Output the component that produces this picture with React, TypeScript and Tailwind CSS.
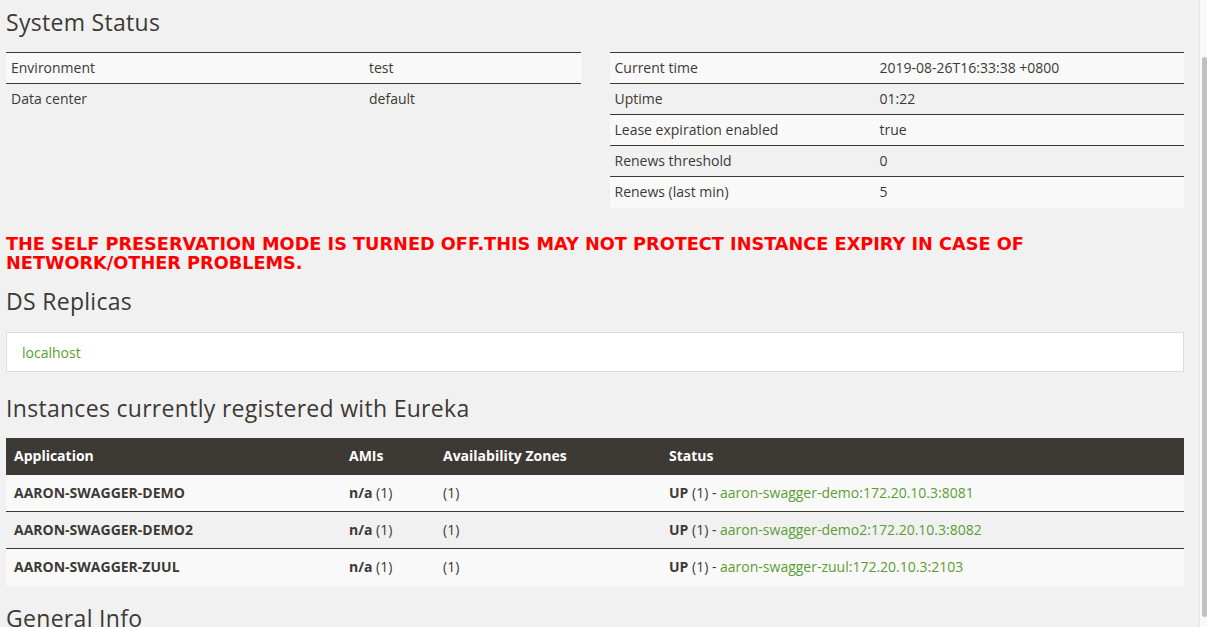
const body = { fontFamily: '"Open Sans", "Liberation Sans", sans-serif' };
const head = { fontFamily: '"Open Sans", Lato, sans-serif' };
const warn = { fontFamily: '"DejaVu Sans", "Open Sans", sans-serif' };

const leftRows = [
  ['Environment', 'test'],
  ['Data center', 'default'],
];

const rightRows = [
  ['Current time', '2019-08-26T16:33:38 +0800'],
  ['Uptime', '01:22'],
  ['Lease expiration enabled', 'true'],
  ['Renews threshold', '0'],
  ['Renews (last min)', '5'],
];

const instances = [
  { app: 'AARON-SWAGGER-DEMO', link: 'aaron-swagger-demo:172.20.10.3:8081' },
  { app: 'AARON-SWAGGER-DEMO2', link: 'aaron-swagger-demo2:172.20.10.3:8082' },
  { app: 'AARON-SWAGGER-ZUUL', link: 'aaron-swagger-zuul:172.20.10.3:2103' },
];

function Heading({ children, className = '' }: { children: React.ReactNode; className?: string }) {
  return (
    <h2
      style={head}
      className={`text-[23px] leading-[28px] font-medium tracking-[0.3px] text-[#3d3935] ${className}`}
    >
      {children}
    </h2>
  );
}

function InfoTable({ rows, keyWidth }: { rows: string[][]; keyWidth: string }) {
  return (
    <div className="flex-1 border-t border-[#3d3935]">
      {rows.map((r, i) => (
        <div
          key={r[0]}
          className={`flex h-[31px] items-center pb-[2px] text-[14px] ${i % 2 === 0 ? 'bg-[#f9f9f9]' : ''} ${
            i < rows.length - 1 ? 'border-b border-[#3d3935]' : ''
          }`}
        >
          <div className={`${keyWidth} pl-[5px]`}>{r[0]}</div>
          <div className="flex-1 pl-[5px]">{r[1]}</div>
        </div>
      ))}
    </div>
  );
}

export default function App() {
  return (
    <div style={body} className="flex h-[627px] w-[1207px] overflow-hidden bg-[#f1f1f1] text-[#3d3935]">
      <div className="flex-1 pl-[6px] pr-[15px]">
        <Heading className="mt-[8px]">System Status</Heading>
        <div className="mt-[16px] flex gap-[29px]">
          <InfoTable rows={leftRows} keyWidth="w-[358px]" />
          <InfoTable rows={rightRows} keyWidth="w-[265px]" />
        </div>

        <h3 style={warn} className="mt-[27px] text-[17.7px] leading-[19px] font-bold text-[#ff0000] uppercase">
          THE SELF PRESERVATION MODE IS TURNED OFF.THIS MAY NOT PROTECT INSTANCE EXPIRY IN CASE OF
          <br />
          NETWORK/OTHER PROBLEMS.
        </h3>

        <Heading className="mt-[14px]">DS Replicas</Heading>
        <div className="mt-[17px] flex h-[40px] items-center border border-[#dddddd] bg-white pl-[15px] text-[14px] text-[#5a9e32]">
          localhost
        </div>

        <Heading className="mt-[22px]">Instances currently registered with Eureka</Heading>
        <div className="mt-[16px] text-[14px]">
          <div className="flex h-[37px] items-center pb-[2px] bg-[#3d3935] font-bold text-white">
            <div className="w-[335px] pl-[8px]">Application</div>
            <div className="w-[94px] pl-[8px]">AMIs</div>
            <div className="w-[226px] pl-[8px]">Availability Zones</div>
            <div className="flex-1 pl-[8px]">Status</div>
          </div>
          {instances.map((it, i) => (
            <div
              key={it.app}
              className={`flex h-[37px] items-center pb-[2px] ${i % 2 === 0 ? 'bg-[#f9f9f9]' : ''} ${
                i < instances.length - 1 ? 'border-b border-[#3d3935]' : ''
              }`}
            >
              <div className="w-[335px] pl-[8px] font-bold">{it.app}</div>
              <div className="w-[94px] pl-[8px]">
                <b>n/a</b> (1)
              </div>
              <div className="w-[226px] pl-[8px]">(1)</div>
              <div className="flex-1 pl-[8px]">
                <b>UP</b> (1) - <span className="text-[#5a9e32]">{it.link}</span>
              </div>
            </div>
          ))}
        </div>

        <Heading className="mt-[18px]">General Info</Heading>
      </div>

      <div className="w-[8px] border-l border-[#e6e6e6] bg-[#f9f9f9] pt-[57px]">
        <div className="ml-[2px] h-[560px] w-[5px] rounded-[3px] bg-[#c1c1c1]" />
      </div>
    </div>
  );
}
